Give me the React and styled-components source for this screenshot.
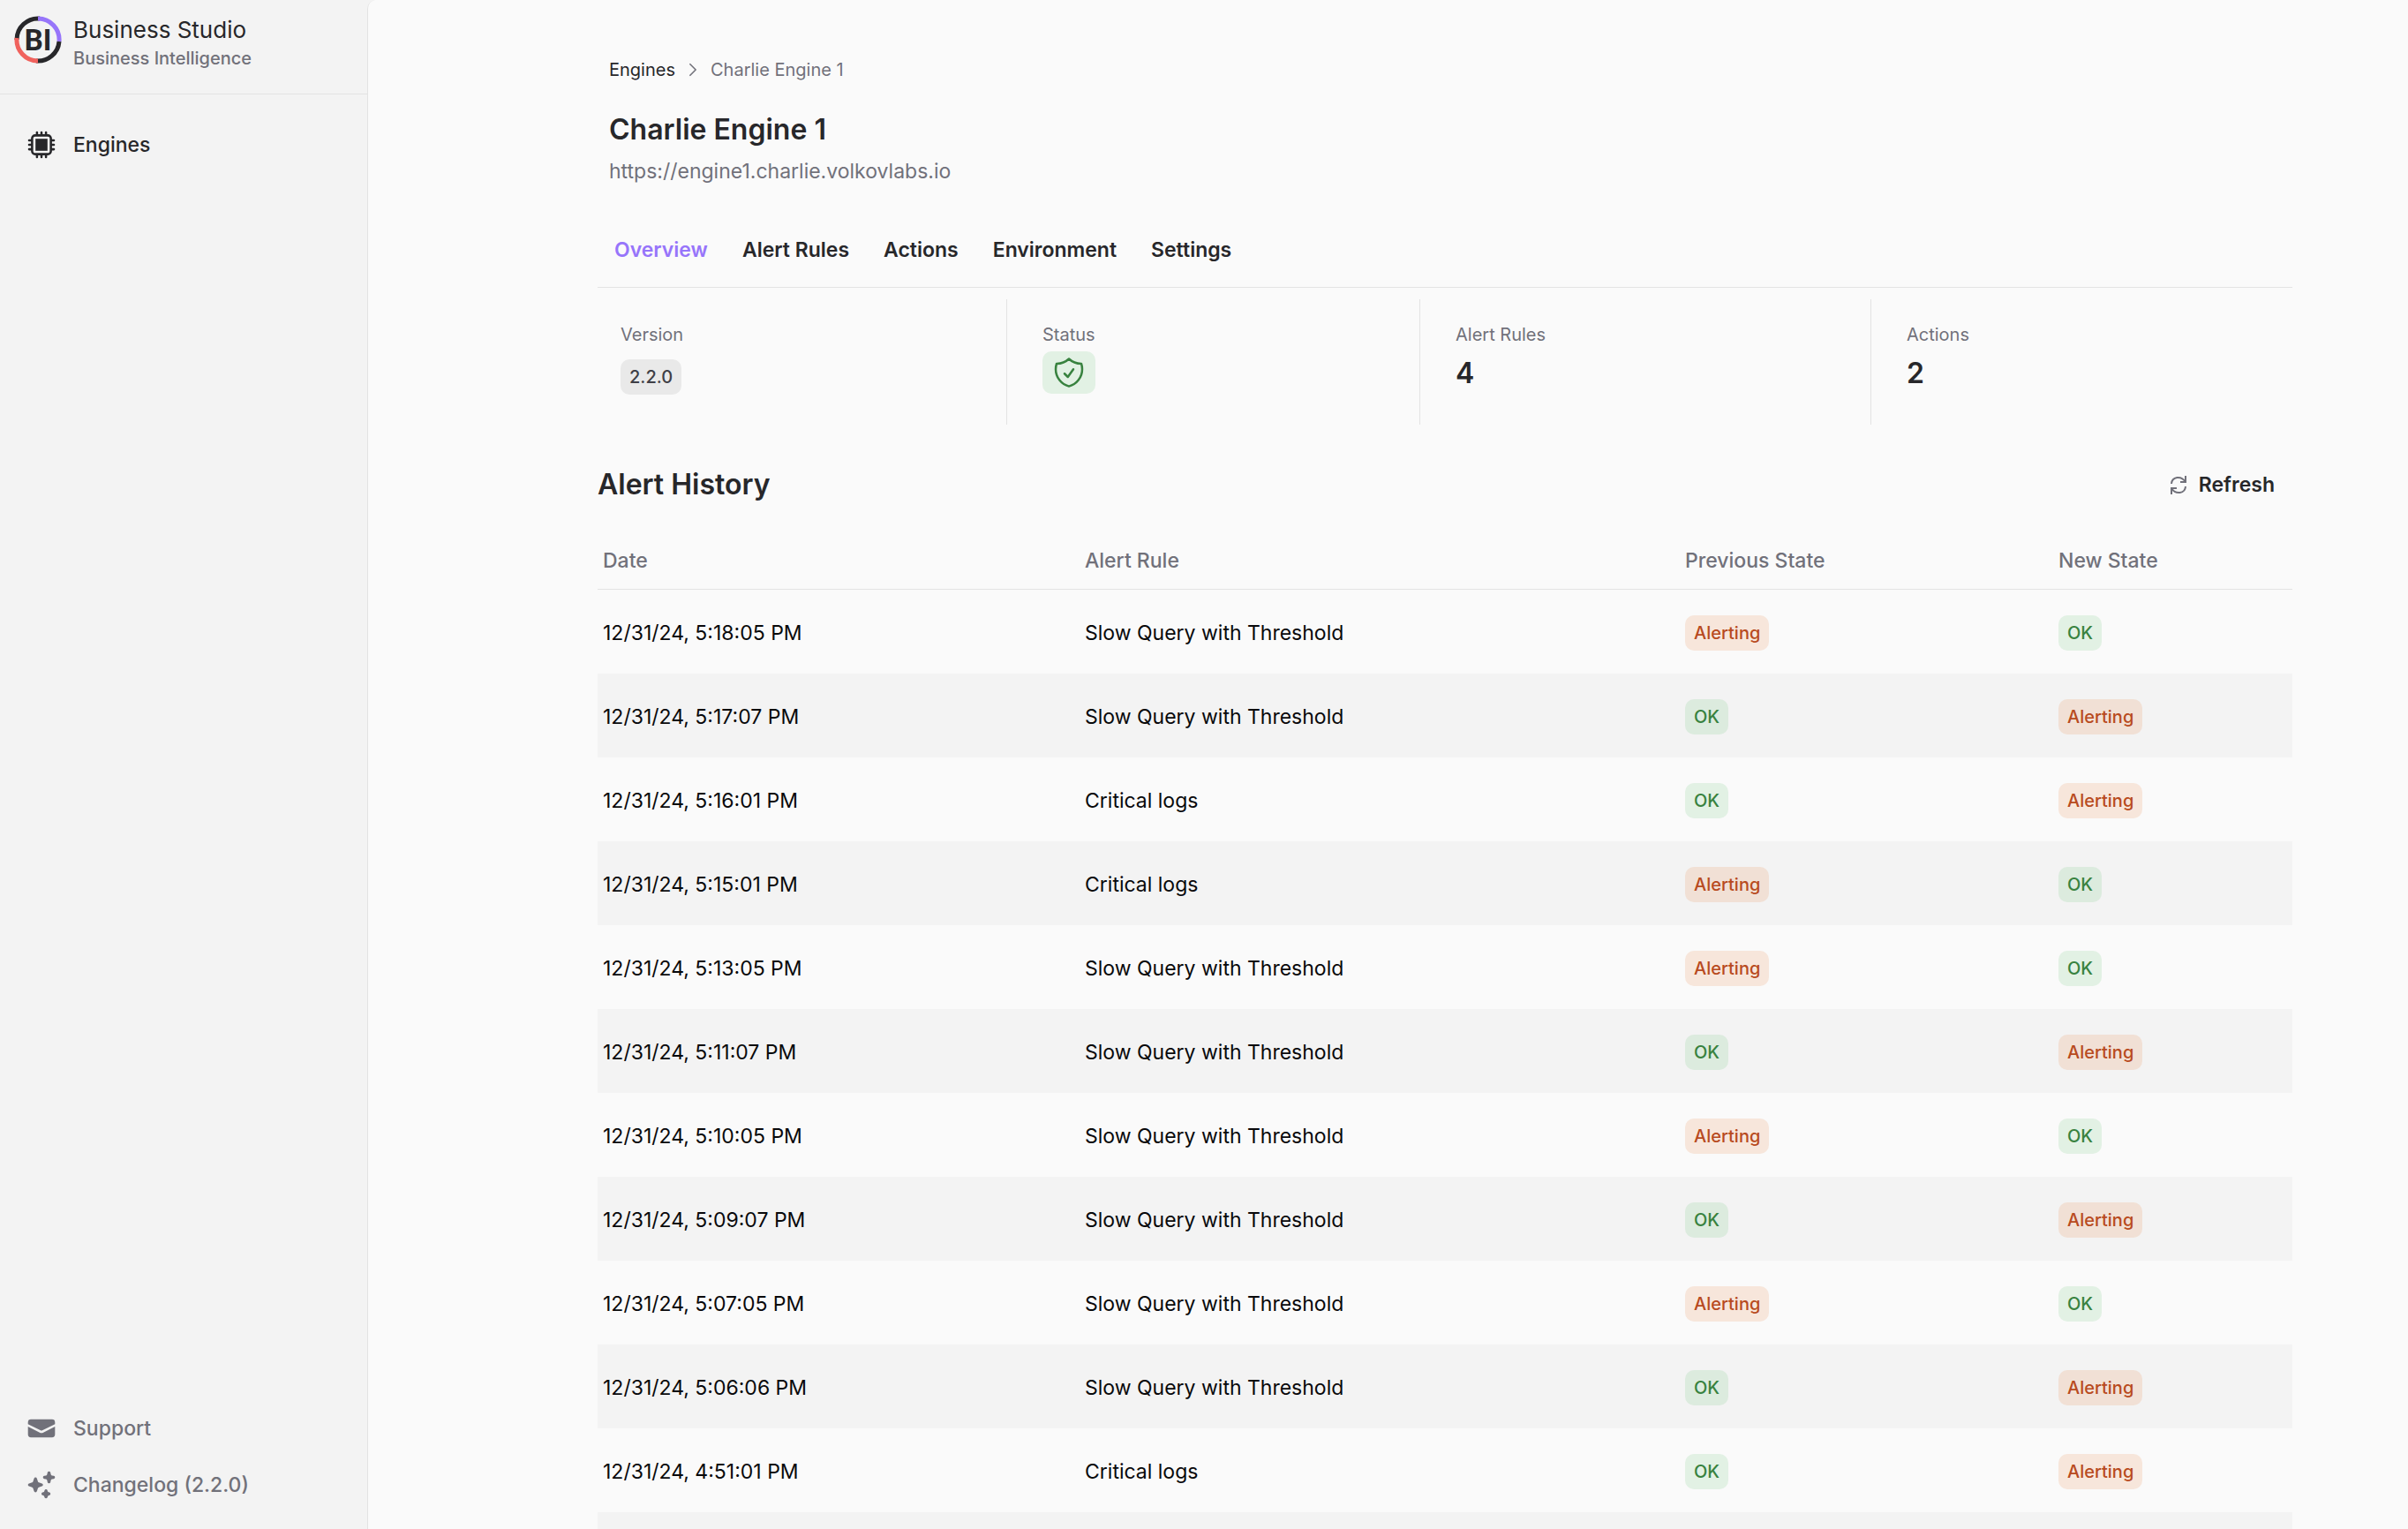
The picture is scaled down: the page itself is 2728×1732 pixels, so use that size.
import React from "react"
import styled, { createGlobalStyle } from "styled-components"
import {
	HiMiniCpuChip,
	HiMiniEnvelope,
	HiMiniSparkles,
	HiOutlineChevronRight,
	HiOutlineShieldCheck,
} from "react-icons/hi2"

const COLORS = {
	page: "#fafafa",
	sidebar: "#f3f3f3",
	border: "#e3e3e3",
	text: "#27272a",
	muted: "#71717a",
	cell: "#09090b",
	primary: "#9775fa",
}

const BADGES = {
	neutral: { background: "#e9e9e9", color: "#3f3f46" },
	success: { background: "rgba(97, 197, 110, 0.15)", color: "#38823f" },
	warning: { background: "rgba(237, 123, 50, 0.15)", color: "#b84a20" },
}

const TABS = ["Overview", "Alert Rules", "Actions", "Environment", "Settings"]

const SLOW = "Slow Query with Threshold"
const CRITICAL = "Critical logs"

const HISTORY = [
	{ date: "12/31/24, 5:18:05 PM", rule: SLOW, prev: "Alerting", next: "OK" },
	{ date: "12/31/24, 5:17:07 PM", rule: SLOW, prev: "OK", next: "Alerting" },
	{ date: "12/31/24, 5:16:01 PM", rule: CRITICAL, prev: "OK", next: "Alerting" },
	{ date: "12/31/24, 5:15:01 PM", rule: CRITICAL, prev: "Alerting", next: "OK" },
	{ date: "12/31/24, 5:13:05 PM", rule: SLOW, prev: "Alerting", next: "OK" },
	{ date: "12/31/24, 5:11:07 PM", rule: SLOW, prev: "OK", next: "Alerting" },
	{ date: "12/31/24, 5:10:05 PM", rule: SLOW, prev: "Alerting", next: "OK" },
	{ date: "12/31/24, 5:09:07 PM", rule: SLOW, prev: "OK", next: "Alerting" },
	{ date: "12/31/24, 5:07:05 PM", rule: SLOW, prev: "Alerting", next: "OK" },
	{ date: "12/31/24, 5:06:06 PM", rule: SLOW, prev: "OK", next: "Alerting" },
	{ date: "12/31/24, 4:51:01 PM", rule: CRITICAL, prev: "OK", next: "Alerting" },
	{ date: "12/31/24, 4:50:01 PM", rule: CRITICAL, prev: "Alerting", next: "OK" },
]

const StateBadge = ({ state }) => (
	<Badge $kind={state === "OK" ? "success" : "warning"}>{state}</Badge>
)

const Logo = () => (
	<LogoSvg viewBox="0 0 54 54" role="img" aria-label="Business Studio logo">
		<g fill="none" strokeWidth="5">
			<path d="M3 27A24 24 0 0 1 29 3" stroke="#27272a" />
			<path d="M27 3A24 24 0 0 1 51 29" stroke="#9775fa" />
			<path d="M51 29A24 24 0 0 1 25 51" stroke="#27272a" />
			<path d="M27 51A24 24 0 0 1 3 25" stroke="#f0625d" />
		</g>
		<text x="27" y="39" textAnchor="middle">
			BI
		</text>
	</LogoSvg>
)

const RefreshIcon = () => (
	<svg viewBox="0 0 18 21" fill="none" stroke="currentColor" strokeWidth="2" aria-hidden="true">
		<path d="M17 0V7H11M1 9C1.500 1 12 -1 17 7" />
		<path d="M1 21V14H7M17 12C16.500 20 6 22 1 14" />
	</svg>
)

const App = () => {
	return (
		<>
			<GlobalStyle />
			<Layout>
				<Sidebar>
					<Brand>
						<Logo />
						<div>
							<BrandName>Business Studio</BrandName>
							<BrandCaption>Business Intelligence</BrandCaption>
						</div>
					</Brand>
					<Nav aria-label="Main">
						<NavLink href="#engines" $active>
							<HiMiniCpuChip />
							Engines
						</NavLink>
					</Nav>
					<SidebarFooter>
						<NavLink href="#support">
							<HiMiniEnvelope />
							Support
						</NavLink>
						<NavLink href="#changelog">
							<HiMiniSparkles />
							Changelog (2.2.0)
						</NavLink>
					</SidebarFooter>
				</Sidebar>
				<Main>
					<Header>
						<Breadcrumbs aria-label="Breadcrumb">
							<CrumbLink href="#engines">Engines</CrumbLink>
							<HiOutlineChevronRight />
							<span>Charlie Engine 1</span>
						</Breadcrumbs>
						<Title>Charlie Engine 1</Title>
						<Url>https://engine1.charlie.volkovlabs.io</Url>
					</Header>
					<Tabs>
						{TABS.map((tab, i) => (
							<Tab key={tab} type="button" $active={i === 0}>
								{tab}
							</Tab>
						))}
					</Tabs>
					<Stats>
						<Stat>
							<StatLabel>Version</StatLabel>
							<VersionBadge $kind="neutral">2.2.0</VersionBadge>
						</Stat>
						<Stat>
							<StatLabel>Status</StatLabel>
							<IconBadge $kind="success">
								<HiOutlineShieldCheck />
							</IconBadge>
						</Stat>
						<Stat>
							<StatLabel>Alert Rules</StatLabel>
							<StatValue>4</StatValue>
						</Stat>
						<Stat>
							<StatLabel>Actions</StatLabel>
							<StatValue>2</StatValue>
						</Stat>
					</Stats>
					<SectionHeader>
						<SectionTitle>Alert History</SectionTitle>
						<RefreshButton type="button">
							<RefreshIcon />
							Refresh
						</RefreshButton>
					</SectionHeader>
					<Table>
						<colgroup>
							<Col $share={546} />
							<Col $share={680} />
							<Col $share={423} />
							<Col $share={271} />
						</colgroup>
						<thead>
							<tr>
								<HeadCell>Date</HeadCell>
								<HeadCell>Alert Rule</HeadCell>
								<HeadCell>Previous State</HeadCell>
								<HeadCell>New State</HeadCell>
							</tr>
						</thead>
						<tbody>
							{HISTORY.map(row => (
								<Row key={row.date}>
									<Cell>{row.date}</Cell>
									<Cell>{row.rule}</Cell>
									<Cell>
										<StateBadge state={row.prev} />
									</Cell>
									<Cell>
										<StateBadge state={row.next} />
									</Cell>
								</Row>
							))}
						</tbody>
					</Table>
				</Main>
			</Layout>
		</>
	)
}

const GlobalStyle = createGlobalStyle`
	*, *::before, *::after {
		box-sizing: border-box;
	}
	body {
		margin: 0;
		background: ${COLORS.sidebar};
		color: ${COLORS.text};
		font-family: Inter, "Liberation Sans", sans-serif;
		font-size: 23px;
		line-height: 32px;
	}
	h1, h2, p {
		margin: 0;
	}
	a {
		text-decoration: none;
	}
`

const Layout = styled.div`
	display: flex;
	height: 100vh;
`

const Sidebar = styled.aside`
	display: flex;
	flex-direction: column;
	flex: none;
	width: 416px;
`

const Brand = styled.div`
	display: flex;
	gap: 13px;
	height: 107px;
	padding: 18px 16px 0;
	border-bottom: 1px solid ${COLORS.border};
`

const LogoSvg = styled.svg`
	width: 54px;
	height: 54px;

	text {
		fill: ${COLORS.text};
		font-family: Roboto, sans-serif;
		font-size: 33px;
		font-weight: 700;
	}
`

const BrandName = styled.p`
	font-size: 26px;
`

const BrandCaption = styled.p`
	color: ${COLORS.muted};
	font-size: 20px;
	font-weight: 500;
`

const Nav = styled.nav`
	padding: 25px 30px;
`

const SidebarFooter = styled.div`
	margin-top: auto;
	padding: 0 30px 18px;
`

const NavLink = styled.a`
	display: flex;
	align-items: center;
	gap: 19px;
	height: 64px;
	color: ${p => (p.$active ? COLORS.text : COLORS.muted)};
	font-weight: 500;

	svg {
		width: 34px;
		height: 34px;
	}
`

const Main = styled.main`
	flex: 1;
	min-width: 0;
	padding: 63px 131px 0 260px;
	border-left: 1px solid ${COLORS.border};
	border-top-left-radius: 10px;
	background: ${COLORS.page};
	overflow-y: auto;
	scrollbar-width: none;
`

const Header = styled.header`
	padding-left: 13px;
`

const Breadcrumbs = styled.nav`
	display: flex;
	align-items: center;
	gap: 10px;
	color: ${COLORS.muted};
	font-size: 20px;

	svg {
		width: 20px;
		height: 20px;
		stroke-width: 2;
	}
`

const CrumbLink = styled.a`
	color: ${COLORS.text};
`

const Title = styled.h1`
	margin-top: 32px;
	font-size: 32px;
	font-weight: 600;
	line-height: 40px;
`

const Url = styled.p`
	margin-top: 11px;
	color: ${COLORS.muted};
`

const Tabs = styled.nav`
	display: flex;
	gap: 39px;
	margin-top: 40px;
	padding: 17px 19px 26px;
	border-bottom: 1px solid ${COLORS.border};
`

const Tab = styled.button`
	padding: 0;
	border: 0;
	background: none;
	color: ${p => (p.$active ? COLORS.primary : COLORS.text)};
	font: inherit;
	font-weight: 600;
	cursor: pointer;
`

const Stats = styled.section`
	display: grid;
	grid-template-columns: 463fr 468fr 511fr 478fr;
	margin-top: 13px;
`

const Stat = styled.div`
	display: flex;
	flex-direction: column;
	align-items: flex-start;
	height: 142px;
	padding: 24px 40px;
	border-left: 1px solid ${COLORS.border};

	&:first-child {
		padding-left: 26px;
		border-left: 0;
	}
`

const StatLabel = styled.p`
	color: ${COLORS.muted};
	font-size: 20px;
`

const StatValue = styled.p`
	margin-top: 8px;
	font-size: 32px;
	font-weight: 600;
	line-height: 40px;
`

const Badge = styled.span`
	display: inline-block;
	padding: 4px 10px;
	border-radius: 10px;
	background: ${p => BADGES[p.$kind].background};
	color: ${p => BADGES[p.$kind].color};
	font-size: 20px;
	font-weight: 500;
	vertical-align: middle;
`

const VersionBadge = styled(Badge)`
	margin-top: 12px;
`

const IconBadge = styled(Badge)`
	margin-top: 3px;

	svg {
		display: block;
		width: 40px;
		height: 40px;
	}
`

const SectionHeader = styled.div`
	display: flex;
	align-items: center;
	justify-content: space-between;
	margin-top: 48px;
	padding-right: 20px;
`

const SectionTitle = styled.h2`
	font-size: 32px;
	font-weight: 600;
	line-height: 40px;
`

const RefreshButton = styled.button`
	display: flex;
	align-items: center;
	gap: 14px;
	padding: 0;
	border: 0;
	background: none;
	color: ${COLORS.text};
	font: inherit;
	font-weight: 600;
	cursor: pointer;

	svg {
		width: 18px;
		height: 21px;
		color: ${COLORS.muted};
	}
`

const Table = styled.table`
	width: 100%;
	margin-top: 30px;
	border-collapse: separate;
	border-spacing: 0;
	table-layout: fixed;
`

const Col = styled.col`
	width: calc(100% * ${p => p.$share} / 1920);
`

const HeadCell = styled.th`
	padding: 20px 6px 16px;
	border-bottom: 1px solid ${COLORS.border};
	color: ${COLORS.muted};
	font-weight: 500;
	text-align: left;
`

const Row = styled.tr`
	&:nth-child(even) {
		background: ${COLORS.sidebar};
	}
`

const Cell = styled.td`
	height: 95px;
	padding: 2px 6px 0;
	color: ${COLORS.cell};
`

export default App
